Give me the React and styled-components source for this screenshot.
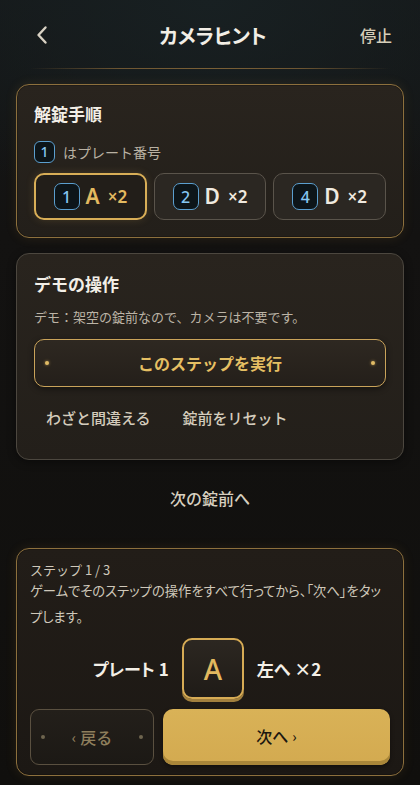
import React from "react";
import styled, { createGlobalStyle, css } from "styled-components";

const Global = createGlobalStyle`
  * { box-sizing: border-box; }
  html, body { margin: 0; padding: 0; }
  body {
    background: #121110;
    font-family: "Noto Sans CJK JP", "Noto Sans", sans-serif;
    color: #e8e2d6;
  }
  button { font-family: inherit; }
`;

const Page = styled.div`
  width: 420px;
  height: 785px;
  overflow: hidden;
  background:
    radial-gradient(ellipse 120% 40% at 50% 0%, #182022 0%, rgba(24,32,34,0) 70%),
    linear-gradient(180deg, #151819 0%, #131211 30%, #100f0d 100%);
  display: flex;
  flex-direction: column;
`;

const Header = styled.header`
  height: 68px;
  display: flex;
  align-items: center;
  justify-content: space-between;
  padding: 2px 28px 0 30px;
`;

const IconButton = styled.button`
  background: none;
  border: none;
  padding: 0;
  width: 24px;
  height: 24px;
  display: flex;
  align-items: center;
  justify-content: center;
  color: #d9d2c4;
`;

const Title = styled.h1`
  margin: 0;
  font-size: 20px;
  font-weight: 700;
  color: #f2eee6;
  font-feature-settings: "palt";
  padding-left: 12px;
`;

const TextAction = styled.button`
  background: none;
  border: none;
  padding: 0;
  font-size: 16px;
  font-weight: 500;
  color: #d6ceb9;
`;

const Divider = styled.div`
  height: 1px;
  margin: 0 30px;
  background: linear-gradient(90deg, rgba(120,95,50,0) 0%, #6e5632 25%, #7a6036 50%, #6e5632 75%, rgba(120,95,50,0) 100%);
`;

const Main = styled.main`
  display: flex;
  flex-direction: column;
  padding: 15px 16px 0;
`;

const Card = styled.section`
  border-radius: 13px;
  ${(p) =>
    p.$tone === "gold"
      ? css`
          border: 1.5px solid #8d703d;
          box-shadow: 0 0 12px rgba(190, 140, 60, 0.12), inset 0 0 0 1px rgba(0,0,0,0.2);
        `
      : css`
          border: 1.5px solid #4c473f;
          box-shadow: 0 2px 8px rgba(0,0,0,0.4);
        `}
  background: ${(p) =>
    p.$dark
      ? "linear-gradient(180deg, #221d18 0%, #1c1814 100%)"
      : "linear-gradient(180deg, #29241e 0%, #231f1a 100%)"};
  padding: ${(p) => p.$pad || "16px 17px 17px"};
  margin-top: ${(p) => p.$gap || 0}px;
  display: flex;
  flex-direction: column;
`;

const CardTitle = styled.h2`
  margin: 0;
  font-size: 17px;
  font-weight: 700;
  line-height: 26px;
  color: #f3efe7;
`;

const Legend = styled.div`
  display: flex;
  align-items: center;
  gap: 8px;
  margin-top: 14px;
  font-size: 14px;
  color: #b9b1a3;
  line-height: 22px;
`;

const Badge = styled.span`
  display: inline-flex;
  align-items: center;
  justify-content: center;
  width: ${(p) => (p.$big ? 26 : 21)}px;
  height: ${(p) => (p.$big ? 27 : 22)}px;
  border-radius: ${(p) => (p.$big ? 7 : 6)}px;
  border: 1.5px solid #5b9fcf;
  background: #0d1519;
  color: #86c6f2;
  font-family: "Noto Sans", sans-serif;
  font-size: ${(p) => (p.$big ? 16 : 14)}px;
  font-weight: 500;
  line-height: 1;
`;

const Steps = styled.div`
  display: grid;
  grid-template-columns: repeat(3, 1fr);
  gap: 7px;
  margin-top: 10px;
`;

const StepButton = styled.button`
  height: 47px;
  border-radius: 10px;
  display: flex;
  align-items: center;
  justify-content: center;
  gap: 6px;
  padding: 0;
  ${(p) =>
    p.$active
      ? css`
          border: 2px solid #d8ae57;
          background: #221e19;
          color: #e3ba60;
          box-shadow: 0 0 8px rgba(216, 174, 87, 0.18);
        `
      : css`
          border: 1.5px solid #5a544b;
          background: #2b2722;
          color: #efe9df;
        `}
`;

const StepLetter = styled.span`
  font-family: "Noto Sans", sans-serif;
  font-size: 21px;
  font-weight: 600;
  line-height: 1;
`;

const StepCount = styled.span`
  font-family: "Noto Sans", sans-serif;
  font-size: 17px;
  font-weight: 600;
  line-height: 1;
  margin-left: 2px;
`;

const Desc = styled.p`
  margin: 9px 0 0;
  font-size: 13px;
  line-height: 22px;
  color: #bcb4a6;
`;

const PrimaryOutline = styled.button`
  position: relative;
  margin-top: 11px;
  height: 48px;
  border-radius: 10px;
  border: 1.5px solid #c9a35a;
  background: linear-gradient(180deg, #2e2821 0%, #241f1a 100%);
  box-shadow: 0 2px 6px rgba(0,0,0,0.45);
  color: #e5bf63;
  font-size: 16px;
  font-weight: 700;
  display: flex;
  align-items: center;
  justify-content: center;
`;

const Dot = styled.span`
  position: absolute;
  top: 50%;
  ${(p) => (p.$side === "left" ? "left: 10px;" : "right: 10px;")}
  width: 4px;
  height: 4px;
  margin-top: -2px;
  border-radius: 50%;
  background: ${(p) => (p.$dim ? "#6e654f" : "#e1bb66")};
  box-shadow: ${(p) => (p.$dim ? "none" : "0 0 3px rgba(230,190,100,0.7)")};
`;

const LinkRow = styled.div`
  display: flex;
  gap: 8px;
  margin-top: 14px;
  margin-bottom: 4px;
`;

const LinkButton = styled.button`
  background: none;
  border: none;
  padding: 6px 12px;
  font-size: 15px;
  font-weight: 500;
  color: #d4ccbc;
  line-height: 22px;
`;

const CenterLink = styled.button`
  align-self: center;
  background: none;
  border: none;
  margin: 23px 0 35px;
  padding: 4px 10px;
  font-size: 16px;
  font-weight: 500;
  color: #d7cfbf;
  line-height: 22px;
`;

const StepLabel = styled.div`
  font-size: 13px;
  line-height: 16px;
  color: #cfc8ba;
`;

const StepDesc = styled.p`
  margin: 0;
  font-size: 13.3px;
  line-height: 26px;
  color: #cfc8ba;
  font-feature-settings: "palt";
  white-space: nowrap;
`;

const PlateRow = styled.div`
  display: flex;
  align-items: center;
  justify-content: center;
  gap: 13px;
  margin-top: 8px;
  padding-right: 6px;
`;

const PlateText = styled.span`
  font-size: 17px;
  font-weight: 700;
  color: #f3efe7;
  font-feature-settings: "palt";
`;

const LetterBox = styled.div`
  width: 62px;
  height: 61px;
  border-radius: 10px;
  border: 2px solid #d6ab55;
  background: linear-gradient(180deg, #2c2721 0%, #1f1b17 100%);
  box-shadow: 0 3px 0 #a2803e;
  display: flex;
  align-items: center;
  justify-content: center;
  font-family: "Noto Sans", sans-serif;
  font-size: 28px;
  font-weight: 500;
  color: #e2b95f;
`;

const NavRow = styled.div`
  display: grid;
  grid-template-columns: 124px 1fr;
  gap: 9px;
  margin-top: 10px;
`;

const BackButton = styled.button`
  position: relative;
  height: 56px;
  border-radius: 9px;
  border: 1.5px solid #5a5040;
  background: linear-gradient(180deg, #231f1a 0%, #1c1915 100%);
  color: #8f7f5c;
  font-size: 16px;
  font-weight: 500;
  display: flex;
  align-items: center;
  justify-content: center;
  gap: 4px;
`;

const NextButton = styled.button`
  height: 56px;
  border-radius: 10px;
  border: none;
  background: linear-gradient(180deg, #d9b257 0%, #d3aa50 100%);
  box-shadow: inset 0 -4px 0 #a98639, 0 2px 4px rgba(0,0,0,0.4);
  color: #1c1710;
  font-size: 16px;
  font-weight: 500;
  display: flex;
  align-items: center;
  justify-content: center;
  gap: 4px;
  padding-bottom: 3px;
`;

const Chevron = styled.span`
  font-size: 14px;
  line-height: 1;
`;

const steps = [
  { n: 1, letter: "A", active: true },
  { n: 2, letter: "D" },
  { n: 4, letter: "D" },
];

export default function App() {
  return (
    <>
      <Global />
      <Page>
        <Header>
          <IconButton aria-label="戻る">
            <svg width="14" height="20" viewBox="0 0 14 20" fill="none">
              <path d="M10.5 2.5 L3.5 10 L10.5 17.5" stroke="currentColor" strokeWidth="2.4" strokeLinecap="round" strokeLinejoin="round" />
            </svg>
          </IconButton>
          <Title>カメラヒント</Title>
          <TextAction>停止</TextAction>
        </Header>
        <Divider />
        <Main>
          <Card $tone="gold">
            <CardTitle>解錠手順</CardTitle>
            <Legend>
              <Badge>1</Badge>
              はプレート番号
            </Legend>
            <Steps>
              {steps.map((s) => (
                <StepButton key={s.n} $active={s.active}>
                  <Badge $big>{s.n}</Badge>
                  <StepLetter>{s.letter}</StepLetter>
                  <StepCount>×2</StepCount>
                </StepButton>
              ))}
            </Steps>
          </Card>

          <Card $gap={15} $pad="17px 17px 20px">
            <CardTitle>デモの操作</CardTitle>
            <Desc>デモ：架空の錠前なので、カメラは不要です。</Desc>
            <PrimaryOutline>
              <Dot $side="left" />
              このステップを実行
              <Dot $side="right" />
            </PrimaryOutline>
            <LinkRow>
              <LinkButton>わざと間違える</LinkButton>
              <LinkButton>錠前をリセット</LinkButton>
            </LinkRow>
          </Card>

          <CenterLink>次の錠前へ</CenterLink>

          <Card $tone="gold" $dark $pad="13px 13px 10px">
            <StepLabel>ステップ 1 / 3</StepLabel>
            <StepDesc>
              ゲームでそのステップの操作をすべて行ってから、「次へ」をタッ
              <br />
              プします。
            </StepDesc>
            <PlateRow>
              <PlateText>プレート 1</PlateText>
              <LetterBox>A</LetterBox>
              <PlateText>左へ ×2</PlateText>
            </PlateRow>
            <NavRow>
              <BackButton>
                <Dot $side="left" $dim />
                <Chevron>‹</Chevron>戻る
                <Dot $side="right" $dim />
              </BackButton>
              <NextButton>
                次へ<Chevron>›</Chevron>
              </NextButton>
            </NavRow>
          </Card>
        </Main>
      </Page>
    </>
  );
}
